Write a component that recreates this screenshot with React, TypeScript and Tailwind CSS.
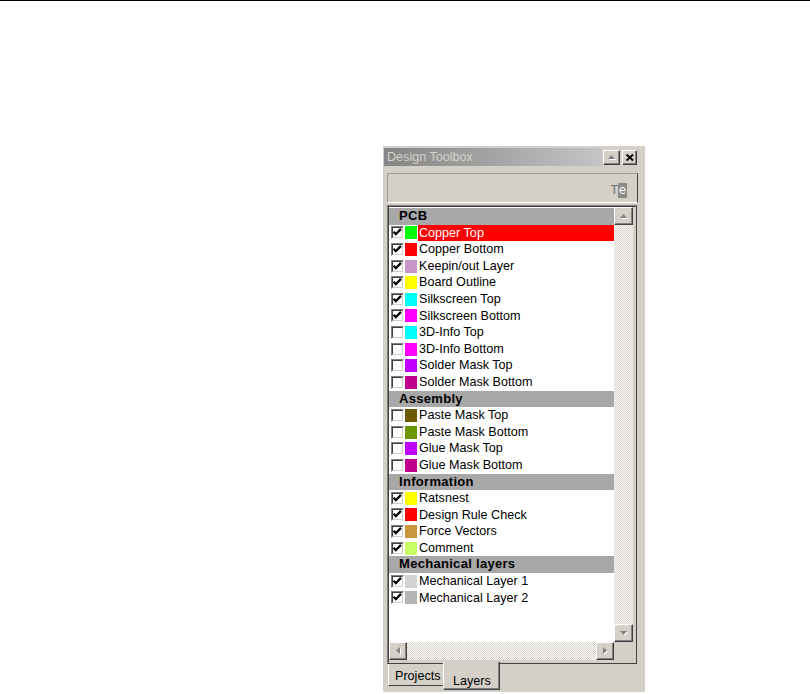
import React from 'react';

type Row = { h?: boolean; name: string; color?: string; on?: boolean; sel?: boolean };

const rows: Row[] = [
  { h: true, name: 'PCB' },
  { name: 'Copper Top', color: 'bg-[#00ff00]', on: true, sel: true },
  { name: 'Copper Bottom', color: 'bg-[#ff0000]', on: true },
  { name: 'Keepin/out Layer', color: 'bg-[#c896c8]', on: true },
  { name: 'Board Outline', color: 'bg-[#ffff00]', on: true },
  { name: 'Silkscreen Top', color: 'bg-[#00ffff]', on: true },
  { name: 'Silkscreen Bottom', color: 'bg-[#ff00ff]', on: true },
  { name: '3D-Info Top', color: 'bg-[#00ffff]' },
  { name: '3D-Info Bottom', color: 'bg-[#ff00ff]' },
  { name: 'Solder Mask Top', color: 'bg-[#c000ff]' },
  { name: 'Solder Mask Bottom', color: 'bg-[#c0008c]' },
  { h: true, name: 'Assembly' },
  { name: 'Paste Mask Top', color: 'bg-[#6b5a00]' },
  { name: 'Paste Mask Bottom', color: 'bg-[#6b9600]' },
  { name: 'Glue Mask Top', color: 'bg-[#c000ff]' },
  { name: 'Glue Mask Bottom', color: 'bg-[#c0008c]' },
  { h: true, name: 'Information' },
  { name: 'Ratsnest', color: 'bg-[#ffff00]', on: true },
  { name: 'Design Rule Check', color: 'bg-[#ff0000]', on: true },
  { name: 'Force Vectors', color: 'bg-[#c8963c]', on: true },
  { name: 'Comment', color: 'bg-[#c8ff64]', on: true },
  { h: true, name: 'Mechanical layers' },
  { name: 'Mechanical Layer 1', color: 'bg-[#d2d2d2]', on: true },
  { name: 'Mechanical Layer 2', color: 'bg-[#b4b4b4]', on: true },
];

// raised win-classic button face
const raised =
  'bg-[#d4d0c8] border border-t-white border-l-white border-r-[#404040] border-b-[#404040] shadow-[inset_-1px_-1px_#808080] flex items-center justify-center';

const dither =
  '[background-image:repeating-conic-gradient(#d4d0c8_0_25%,#ffffff_0_50%)] [background-size:2px_2px]';

function Arrow({ dir, color = '#808080' }: { dir: 'up' | 'down' | 'left' | 'right'; color?: string }) {
  const pts = {
    up: '3.5,0 7,4 0,4',
    down: '0,0 7,0 3.5,4',
    left: '4,0 4,7 0,3.5',
    right: '0,0 0,7 4,3.5',
  }[dir];
  const vertical = dir === 'up' || dir === 'down';
  return (
    <svg width={vertical ? 8 : 5} height={vertical ? 5 : 8} viewBox={vertical ? '0 0 8 5' : '0 0 5 8'}>
      <polygon points={pts} fill="#ffffff" transform="translate(1,1)" />
      <polygon points={pts} fill={color} />
    </svg>
  );
}

function Check({ on }: { on?: boolean }) {
  return (
    <div className="w-[13px] h-[13px] shrink-0 bg-white border border-t-[#808080] border-l-[#808080] border-r-white border-b-white">
      <div className="w-full h-full border border-t-[#404040] border-l-[#404040] border-r-[#d4d0c8] border-b-[#d4d0c8]">
        {on && (
          <svg width="9" height="9" viewBox="0 0 9 9" className="block">
            <polyline points="0.6,3.8 2.8,6.2 8,0.9" fill="none" stroke="#000" strokeWidth="2.3" />
          </svg>
        )}
      </div>
    </div>
  );
}

export default function App() {
  return (
    <div className="min-h-screen bg-white [font-family:'Liberation_Sans',Arial,sans-serif]">
      <div className="h-px bg-black w-full" />

      <div className="ml-[383px] mt-[145px] w-[262px] h-[546px] bg-[#d4d0c8] flex flex-col">
        {/* title bar */}
        <div className="flex items-center h-[18px] mt-[2px] ml-px mr-[8px]">
          <div className="flex-1 h-full bg-linear-to-r from-[#858585] to-[#c4c4c4] pl-[3px] text-[12.6px] leading-[18px] text-[#d6d3cc] whitespace-nowrap">
            Design Toolbox
          </div>
          <div className={`ml-px w-[17px] h-[15px] ${raised}`}>
            <Arrow dir="up" />
          </div>
          <div className={`ml-[2px] w-[15px] h-[15px] ${raised}`}>
            <svg width="8" height="7" viewBox="0 0 8 7">
              <path d="M0.5 0.5 L7 6.5 M7 0.5 L0.5 6.5" stroke="#000" strokeWidth="1.9" />
            </svg>
          </div>
        </div>

        {/* toolbar */}
        <div className="mt-[7px] ml-[4px] w-[251px] h-[30px] border border-t-[#9a9a9a] border-l-[#9a9a9a] border-r-[#404040] border-b-white flex items-end justify-end pr-[10px] pb-[4px]">
          <div className="flex text-[12.5px] leading-[15px]">
            <span className="text-[#707070]">T</span>
            <span className="bg-[#8a8a8a] text-white px-px">e</span>
          </div>
        </div>

        {/* list frame */}
        <div className="mt-[2px] ml-[4px] w-[250px] h-[459px] border border-t-[#808080] border-l-[#808080] border-r-[#404040] border-b-[#404040]">
          <div className="w-full h-full border border-t-[#404040] border-l-[#404040] border-r-[#d4d0c8] border-b-[#d4d0c8] pr-[2px] pb-[2px] flex flex-col">
            <div className="flex h-[435px]">
              <div className="flex-1 bg-white text-[12.6px] overflow-hidden pt-px">
                {rows.map((r) =>
                  r.h ? (
                    <div
                      key={r.name}
                      className="h-[16.6px] bg-[#a8a8a8] pl-[10px] font-bold text-[13px] tracking-[0.3px] leading-[16.6px] text-black whitespace-nowrap"
                    >
                      {r.name}
                    </div>
                  ) : (
                    <div key={r.name} className="flex items-center h-[16.6px] pl-[2px]">
                      <Check on={r.on} />
                      <div className={`ml-px w-[12px] h-[13px] shrink-0 ${r.color}`} />
                      <div
                        className={`ml-px flex-1 h-full pl-px leading-[16.6px] whitespace-nowrap ${
                          r.sel ? 'bg-[#ff0000] text-white' : 'text-black'
                        }`}
                      >
                        {r.name}
                      </div>
                    </div>
                  )
                )}
              </div>
              {/* vertical scrollbar */}
              <div className="w-[19px] flex flex-col">
                <div className={`h-[18px] ${raised}`}>
                  <Arrow dir="up" />
                </div>
                <div className={`flex-1 ${dither}`} />
                <div className={`h-[18px] ${raised}`}>
                  <Arrow dir="down" />
                </div>
              </div>
            </div>
            {/* horizontal scrollbar */}
            <div className="flex h-[18px]">
              <div className={`w-[18px] ${raised}`}>
                <Arrow dir="left" />
              </div>
              <div className={`flex-1 ${dither}`} />
              <div className={`w-[18px] ${raised}`}>
                <Arrow dir="right" />
              </div>
              <div className="w-[19px] bg-[#d4d0c8]" />
            </div>
          </div>
        </div>

        {/* tabs */}
        <div className="flex items-start ml-[5px] text-[12.6px] text-black">
          <div className="w-[55px] h-[22px] border-l border-l-white border-b border-b-[#404040] pl-[6px] pt-[3px] leading-[18px]">
            Projects
          </div>
          <div className="relative -mt-[2px] w-[57px] h-[28px] bg-[#d4d0c8] border-l border-l-white border-r border-r-[#404040] border-b border-b-[#404040] shadow-[inset_-1px_-1px_#808080] pl-[9px] pt-[10px] leading-[18px]">
            Layers
          </div>
        </div>
      </div>
    </div>
  );
}
